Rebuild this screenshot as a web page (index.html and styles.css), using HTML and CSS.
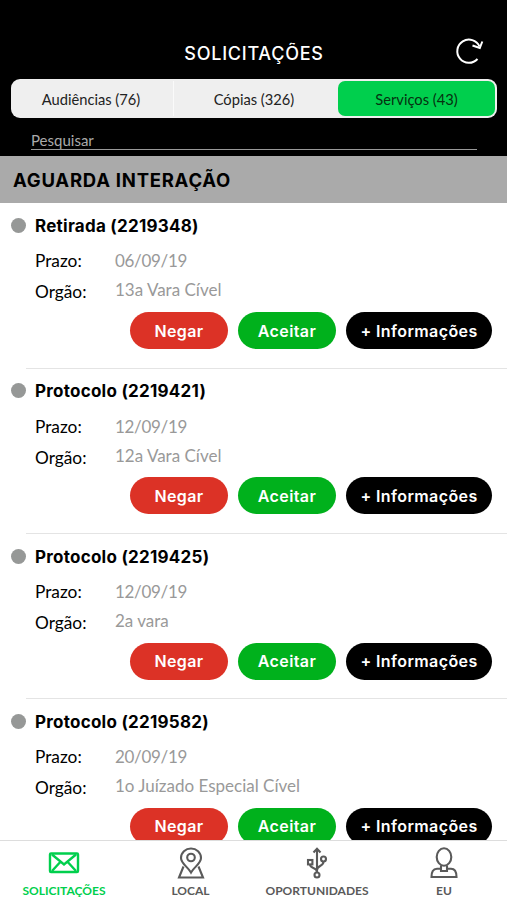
FILE: index.html
```html
<!DOCTYPE html>
<html lang="pt-BR">
<head>
    <meta charset="UTF-8">
    <meta name="viewport" content="width=device-width, initial-scale=1.0">
    <title>Solicitações</title>
    <link rel="stylesheet" href="styles.css">
</head>
<body>
    <div class="app">
        <header class="header">
            <div class="title-bar">
                <h1>SOLICITAÇÕES</h1>
                <svg class="refresh" width="32" height="32" viewBox="0 0 32 32" fill="none" stroke="#fff" stroke-width="2">
                    <path d="M25.500 24A11.600 11.600 0 1 1 27.500 11.500"/>
                    <path d="M20.500 10.500L27.800 13L30.300 6.500"/>
                </svg>
            </div>
            <nav class="tabs">
                <div class="tab">Audiências (76)</div>
                <div class="tab">Cópias (326)</div>
                <div class="tab active">Serviços (43)</div>
            </nav>
            <div class="search">Pesquisar</div>
        </header>

        <h2 class="section">AGUARDA INTERAÇÃO</h2>

        <main class="list">
            <article class="item">
                <div class="item-title"><span class="dot"></span><h3>Retirada (2219348)</h3></div>
                <dl>
                    <dt>Prazo:</dt><dd class="date">06/09/19</dd>
                    <dt>Orgão:</dt><dd>13a Vara Cível</dd>
                </dl>
                <div class="actions">
                    <button class="deny">Negar</button>
                    <button class="accept">Aceitar</button>
                    <button class="info">+ Informações</button>
                </div>
            </article>
            <article class="item">
                <div class="item-title"><span class="dot"></span><h3>Protocolo (2219421)</h3></div>
                <dl>
                    <dt>Prazo:</dt><dd class="date">12/09/19</dd>
                    <dt>Orgão:</dt><dd>12a Vara Cível</dd>
                </dl>
                <div class="actions">
                    <button class="deny">Negar</button>
                    <button class="accept">Aceitar</button>
                    <button class="info">+ Informações</button>
                </div>
            </article>
            <article class="item">
                <div class="item-title"><span class="dot"></span><h3>Protocolo (2219425)</h3></div>
                <dl>
                    <dt>Prazo:</dt><dd class="date">12/09/19</dd>
                    <dt>Orgão:</dt><dd>2a vara</dd>
                </dl>
                <div class="actions">
                    <button class="deny">Negar</button>
                    <button class="accept">Aceitar</button>
                    <button class="info">+ Informações</button>
                </div>
            </article>
            <article class="item">
                <div class="item-title"><span class="dot"></span><h3>Protocolo (2219582)</h3></div>
                <dl>
                    <dt>Prazo:</dt><dd class="date">20/09/19</dd>
                    <dt>Orgão:</dt><dd>1o Juízado Especial Cível</dd>
                </dl>
                <div class="actions">
                    <button class="deny">Negar</button>
                    <button class="accept">Aceitar</button>
                    <button class="info">+ Informações</button>
                </div>
            </article>
        </main>

        <footer class="bottom-nav">
            <div class="nav-item active">
                <svg width="32" height="34" viewBox="0 0 32 34">
                    <rect x="2" y="7.500" width="28" height="18.500" rx="1"/>
                    <path d="M4 8.500L16 18.500L28 8.500M4 25L12.500 15.800M28 25L19.500 15.800"/>
                </svg>
                <span>SOLICITAÇÕES</span>
            </div>
            <div class="nav-item">
                <svg width="32" height="34" viewBox="0 0 32 34">
                    <path d="M16 26.500C13 21 6 17.500 6 12A10 9.500 0 0 1 26 12C26 17.500 19 21 16 26.500Z"/>
                    <circle cx="16" cy="11.500" r="3.800"/>
                    <path d="M8.500 20.500L4 31.500H28L23.500 20.500"/>
                </svg>
                <span>LOCAL</span>
            </div>
            <div class="nav-item">
                <svg width="32" height="34" viewBox="0 0 32 34">
                    <circle cx="16" cy="29" r="2.500"/>
                    <path d="M16 26.500V3M12.500 6.500L16 2.700L19.500 6.500"/>
                    <rect x="7" y="14" width="4.400" height="4.400"/>
                    <path d="M9 18.500C9 23 16 21 16 26M22.500 15.500C22.500 21 16 19 16 24"/>
                    <circle cx="22.500" cy="13" r="2.500"/>
                </svg>
                <span>OPORTUNIDADES</span>
            </div>
            <div class="nav-item">
                <svg width="32" height="34" viewBox="0 0 32 34">
                    <ellipse cx="16" cy="11" rx="7.300" ry="8.700"/>
                    <path d="M13 19.500V25H19V19.500"/>
                    <path d="M13 22.800H9C5 22.800 3.500 26 3.500 31H28.500C28.500 26 27 22.800 23 22.800H19"/>
                </svg>
                <span>EU</span>
            </div>
        </footer>
    </div>
</body>
</html>
```
FILE: styles.css
```css
* {
    box-sizing: border-box;
}

body {
    margin: 0;
    font-family: Lato, "Liberation Sans", sans-serif;
    background: #fff;
    color: #000;
}

h1, h2, h3, dl, dd {
    margin: 0;
}

.app {
    display: flex;
    flex-direction: column;
    height: 900px;
    overflow: hidden;
}

.header {
    flex: none;
    height: 156px;
    padding: 37px 10px 0 11px;
    background: #000;
}

.title-bar {
    display: grid;
    grid-template-columns: 1fr auto 1fr;
    align-items: center;
    height: 32px;
    margin-bottom: 10px;
    color: #fff;
}

h1 {
    grid-column: 2;
    font-family: Inter, sans-serif;
    font-size: 18px;
    font-weight: 500;
    letter-spacing: 0.75px;
}

.refresh {
    justify-self: end;
    margin-right: 13px;
    margin-top: -4px;
}

.tabs {
    display: flex;
    height: 39px;
    padding: 2px 2px 2px 0;
    background: #efefef;
    border-radius: 9px;
}

.tab {
    flex: 1;
    display: flex;
    align-items: center;
    justify-content: center;
    padding-right: 2px;
    font-size: 14.7px;
    color: #222;
    border-left: 1px solid #fafafa;
}

.tab:first-child {
    border-left: none;
}

.tab.active {
    flex: none;
    width: 157px;
    margin-left: 2px;
    padding: 0;
    background: #00cf4d;
    border: none;
    border-radius: 7px;
    color: #063010;
}

.search {
    height: 19px;
    margin: 13px 20px 0;
    border-bottom: 1px solid #999;
    font-size: 15px;
    line-height: 19px;
    color: #aaa;
}

.section {
    flex: none;
    height: 47px;
    padding-left: 13px;
    background: #aaa;
    font-family: Inter, sans-serif;
    font-size: 18.5px;
    font-weight: 700;
    line-height: 49px;
    letter-spacing: 0.75px;
}

.list {
    flex: 1;
    min-height: 0;
    padding-top: 0.5px;
    overflow: hidden;
}

.item {
    height: 165.3px;
    padding: 12.5px 15px 0 11px;
    background: linear-gradient(#e4e4e4, #e4e4e4) 26px 100% / 100% 1px no-repeat;
}

.item-title {
    display: flex;
    align-items: center;
    gap: 9px;
    height: 20px;
}

.dot {
    width: 15px;
    height: 15px;
    margin-top: -1px;
    border-radius: 50%;
    background: #969897;
}

h3 {
    font-family: Inter, sans-serif;
    font-size: 17px;
    font-weight: 700;
    letter-spacing: 0.25px;
}

dl {
    display: grid;
    grid-template-columns: 80px 1fr;
    grid-template-rows: 29.5px 30.5px;
    align-items: center;
    height: 60px;
    margin: 10px 0 6px 24px;
    font-size: 17.3px;
}

dt:nth-of-type(2) {
    padding-top: 2px;
}

dd {
    font-size: 17px;
    color: #999;
}

dd:nth-of-type(2) {
    padding-bottom: 2px;
}

.date {
    letter-spacing: -0.3px;
}

.actions {
    display: flex;
    justify-content: flex-end;
    gap: 10px;
}

button {
    width: 98px;
    height: 37px;
    padding: 0;
    border: none;
    border-radius: 19px;
    font-family: Inter, sans-serif;
    font-size: 16px;
    font-weight: 600;
    letter-spacing: 0.4px;
    color: #fff;
}

.deny {
    background: #dc3226;
}

.accept {
    background: #00b11c;
}

.info {
    width: 146px;
    background: #000;
}

.bottom-nav {
    display: grid;
    grid-template-columns: 128px 125px 128px 126px;
    flex: none;
    height: 60px;
    border-top: 1px solid #ddd;
    background: #fff;
}

.nav-item {
    display: flex;
    flex-direction: column;
    align-items: center;
    padding-top: 5px;
    font-size: 12px;
    font-weight: 700;
    color: #5a5a5a;
}

.nav-item svg {
    margin-bottom: 3px;
    fill: none;
    stroke: currentColor;
    stroke-width: 2.1;
}

.nav-item.active {
    color: #00cf4d;
}

.nav-item.active svg {
    stroke-width: 2.4;
}
```
